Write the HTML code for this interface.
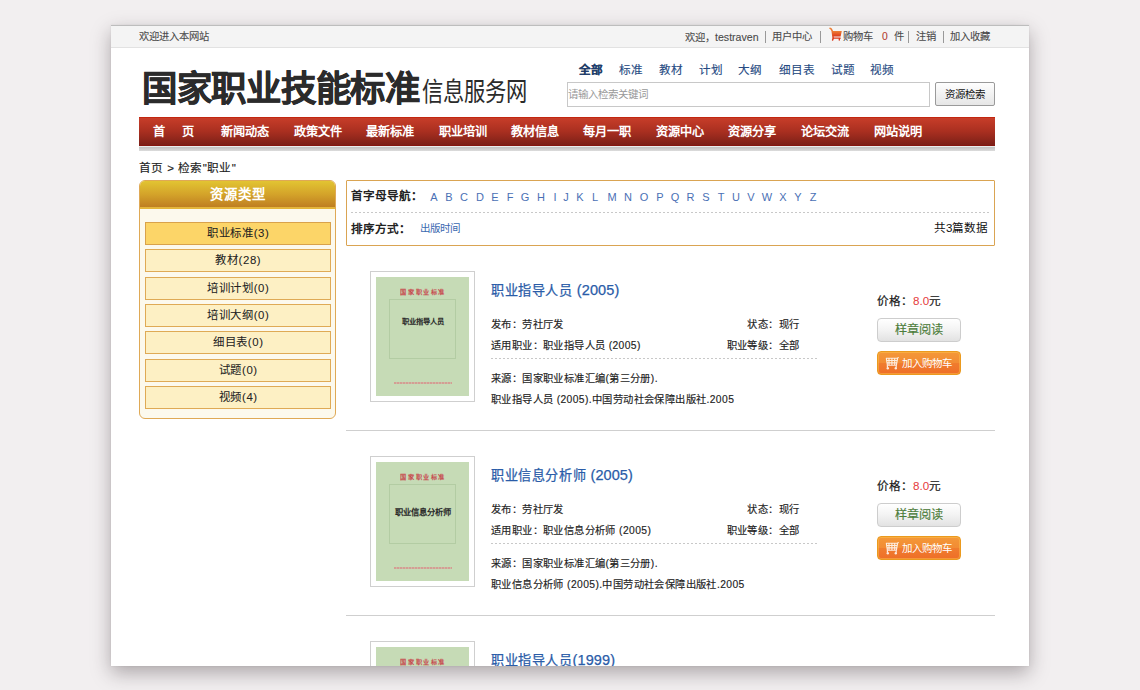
<!DOCTYPE html>
<html lang="zh-CN"><head><meta charset="utf-8">
<style>
*{margin:0;padding:0;box-sizing:border-box}
html,body{width:1140px;height:690px;overflow:hidden;background:#f2eff0;font-family:"Liberation Sans",sans-serif;color:#333}
#win{position:absolute;left:111px;top:25px;width:918px;height:641px;background:#fff;overflow:hidden;box-shadow:0 7px 18px rgba(50,40,45,.36),0 0 2px rgba(0,0,0,.08)}
#pg{position:absolute;left:-111px;top:-25px;width:1140px;height:690px}
.a{position:absolute;white-space:nowrap;line-height:1}
#topbar{position:absolute;left:111px;top:25px;width:918px;height:23px;background:#f4f4f4;border-top:1px solid #bdbdbd;border-bottom:1px solid #e2e2e2}
.tb{font-size:10.3px;color:#4a4a4a;top:32px;-webkit-text-stroke:0.1px #4a4a4a}
.sep{position:absolute;top:31px;width:1px;height:12px;background:#999}
.logo{left:142px;top:72px;font-size:35.4px;font-weight:bold;color:#2b2b2b;letter-spacing:-0.3px;-webkit-text-stroke:0.6px #2b2b2b}
.logo2{left:422px;top:80px;font-size:21.3px;color:#2b2b2b;transform:scaleY(1.25);transform-origin:0 0}
.tab{top:64px;font-size:11.6px;color:#264a82;-webkit-text-stroke:0.12px #264a82}
#search{position:absolute;left:567px;top:82px;width:363px;height:25px;border:1px solid #c8c8c8;background:#fff}
#search span{position:absolute;left:0px;top:6px;font-size:10.5px;color:#999;line-height:1;white-space:nowrap}
#sbtn{position:absolute;left:935px;top:82px;width:60px;height:24px;border:1px solid #9a9a9a;border-radius:2px;background:linear-gradient(#fefefe,#e6e6e6);font-size:10.5px;color:#111;line-height:22px;text-align:center}
#nav{position:absolute;left:139px;top:117px;width:856px;height:29px;border-top:1px solid #c3260f;border-bottom:1px solid #861710;background:linear-gradient(#c73d29,#a92f20 50%,#7c2018)}
#navsh{position:absolute;left:139px;top:146px;width:856px;height:5px;border-top:1px solid #e9eeee;background:linear-gradient(#c2c2c2,#dcdcdc)}
.nv{top:125.8px;font-size:12.2px;font-weight:bold;color:#fff}
.crumb{left:139px;top:162px;font-size:11.6px;color:#222;letter-spacing:0.35px;-webkit-text-stroke:0.15px #222}
#side{position:absolute;left:139px;top:180px;width:197px;height:239px;border:1px solid #dfa956;border-radius:6px;background:#fcf9ed;overflow:hidden}
#sidehd{position:absolute;left:0;top:0;width:195px;height:28px;background:linear-gradient(#e2c432,#d4a42a 50%,#bf7e21);border-bottom:2px solid #e4b53a}
#sidehd span{position:absolute;left:0;width:195px;padding-left:1px;text-align:center;top:7px;font-size:13.4px;font-weight:bold;color:#fff;line-height:1;letter-spacing:1px}
.si{position:absolute;left:145px;width:186px;height:23px;border:1px solid #dfaa55;background:#fdf0c4;font-size:11.4px;color:#222;text-align:center;line-height:21px;letter-spacing:0.6px;padding-left:0.6px;-webkit-text-stroke:0.05px #222}
.si.on{background:#fcd568;border-color:#d9a24b}
#filt{position:absolute;left:346px;top:180px;width:649px;height:66px;border:1.5px solid #daa452;border-radius:1px}
.dash{position:absolute;height:1px;background:repeating-linear-gradient(90deg,#c8c8c8 0 2px,transparent 2px 4px)}
.fl{font-size:11.6px;font-weight:bold;color:#222}
.lt{position:absolute;top:191.5px;font-size:11px;color:#4a70b5;line-height:1}
.item{position:absolute;left:0;width:1140px;height:185px}
.cov{position:absolute;left:370px;top:271px;width:105px;height:131px;border:1px solid #cfcfcf;background:#fff}
.cov .g{position:absolute;left:5px;top:5px;width:93px;height:119px;background:#c6dbb6}
.cov .fr{position:absolute;left:13px;top:22px;width:67px;height:60px;border:1px solid #b3cca3}
.cov .r1{position:absolute;left:0;width:93px;padding-left:1.6px;top:12px;text-align:center;font-family:"Liberation Serif",serif;font-size:6.2px;font-weight:bold;color:#c8303c;letter-spacing:1.6px;opacity:.85;line-height:1}
.cov .b1{position:absolute;left:0;width:93px;top:41px;text-align:center;font-family:"Liberation Serif",serif;font-size:7.3px;font-weight:bold;color:#2a2a2a;line-height:1}
.cov .r2{position:absolute;left:18px;width:58px;top:105px;height:2px;opacity:.75;background:repeating-linear-gradient(90deg,#d98a88 0 2px,#cfb0a0 2px 3px)}
.ttl{font-size:13.1px;color:#2a5ca8;left:491px;letter-spacing:0.6px;-webkit-text-stroke:0.25px #2a5ca8}
.ttl .ln{font-size:14.5px;letter-spacing:0.1px}
.tx{font-size:10.3px;color:#222;letter-spacing:0.4px;-webkit-text-stroke:0.15px #222}
.price{left:877px;font-size:11.6px;color:#1a1a1a;-webkit-text-stroke:0.2px #1a1a1a}
.price b{-webkit-text-stroke:0}
.price b{font-weight:normal;color:#e53a3c}
.btn1{position:absolute;left:877px;width:84px;height:24px;border:1px solid #cdcdcd;border-radius:4px;background:linear-gradient(#ffffff,#f3f3f3 50%,#e2e2e2);font-size:12.2px;color:#4d7d3b;text-align:center;line-height:22px;-webkit-text-stroke:0.15px #4d7d3b}
.btn2{position:absolute;left:877px;width:84px;height:24px;border:1px solid #eb9a1e;border-radius:4px;box-shadow:inset 0 0 0 1px rgba(255,200,80,.45);background:linear-gradient(#f49838,#f28c34 48%,#f07c2e 52%,#ee6e28);font-size:10.5px;color:#fff;line-height:22px;letter-spacing:0}
.btn2 svg{position:absolute;left:7px;top:5px;opacity:.85}
.btn2 span{position:absolute;left:24px;top:0}
.hr{position:absolute;left:346px;width:649px;height:1px;background:#cfcfcf}
</style></head><body>
<div id="win"><div id="pg">
<div id="topbar"></div>
<div class="a tb" style="left:139px">欢迎进入本网站</div>
<div class="a tb" style="left:685px">欢迎，<span style="font-size:10.6px">testraven</span></div>
<div class="sep" style="left:765px"></div>
<div class="a tb" style="left:772px">用户中心</div>
<div class="sep" style="left:820px"></div>
<svg class="a" style="left:829px;top:27px" width="14" height="14" viewBox="0 0 14 14"><defs><linearGradient id="cg" x1="0" y1="0" x2="0" y2="1"><stop offset="0" stop-color="#ee8035"/><stop offset="1" stop-color="#dc3a1c"/></linearGradient></defs><path d="M1 1.3Q2.6 1.6 3.2 4L4.2 11.4 3.6 13" fill="none" stroke="url(#cg)" stroke-width="1.5" stroke-linecap="round"/><path d="M3.2 4H12.8L11.6 9.4H4z" fill="url(#cg)"/><path d="M4.2 11.2H11.2M10.6 11.2L10.2 13" stroke="#dc3a1c" stroke-width="1.3" fill="none" stroke-linecap="round"/></svg>
<div class="a tb" style="left:843px">购物车</div>
<div class="a tb" style="left:882px;color:#c0392b">0</div>
<div class="a tb" style="left:894px">件</div>
<div class="sep" style="left:908px"></div>
<div class="a tb" style="left:916px">注销</div>
<div class="sep" style="left:943px"></div>
<div class="a tb" style="left:950px">加入收藏</div>

<div class="a logo">国家职业技能标准</div>
<div class="a logo2">信息服务网</div>

<div class="a tab" style="left:579px;color:#111;font-weight:bold">全部</div>
<div class="a tab" style="left:619px">标准</div>
<div class="a tab" style="left:659px">教材</div>
<div class="a tab" style="left:699px">计划</div>
<div class="a tab" style="left:738px">大纲</div>
<div class="a tab" style="left:779px">细目表</div>
<div class="a tab" style="left:831px">试题</div>
<div class="a tab" style="left:870px">视频</div>
<div id="search"><span>请输入检索关键词</span></div>
<div id="sbtn">资源检索</div>

<div id="nav"></div><div id="navsh"></div>
<div class="a nv" style="left:153px">首&nbsp;&nbsp;&nbsp;&nbsp;&nbsp;页</div>
<div class="a nv" style="left:221px">新闻动态</div>
<div class="a nv" style="left:294px">政策文件</div>
<div class="a nv" style="left:366px">最新标准</div>
<div class="a nv" style="left:439px">职业培训</div>
<div class="a nv" style="left:511px">教材信息</div>
<div class="a nv" style="left:583px">每月一职</div>
<div class="a nv" style="left:656px">资源中心</div>
<div class="a nv" style="left:728px">资源分享</div>
<div class="a nv" style="left:801px">论坛交流</div>
<div class="a nv" style="left:874px">网站说明</div>

<div class="a crumb">首页 &gt; 检索"职业"</div>

<div id="side"><div id="sidehd"><span>资源类型</span></div></div>
<div class="si on" style="top:222px">职业标准(3)</div>
<div class="si" style="top:249px">教材(28)</div>
<div class="si" style="top:277px">培训计划(0)</div>
<div class="si" style="top:304px">培训大纲(0)</div>
<div class="si" style="top:331px">细目表(0)</div>
<div class="si" style="top:359px">试题(0)</div>
<div class="si" style="top:386px">视频(4)</div>

<div id="filt"></div>
<div class="a fl" style="left:351px;top:190px">首字母导航：</div>
<div class="lt" style="left:424px;width:20px;text-align:center">A</div><div class="lt" style="left:439px;width:20px;text-align:center">B</div><div class="lt" style="left:454px;width:20px;text-align:center">C</div><div class="lt" style="left:470px;width:20px;text-align:center">D</div><div class="lt" style="left:485px;width:20px;text-align:center">E</div><div class="lt" style="left:500px;width:20px;text-align:center">F</div><div class="lt" style="left:515px;width:20px;text-align:center">G</div><div class="lt" style="left:531px;width:20px;text-align:center">H</div><div class="lt" style="left:545px;width:20px;text-align:center">I</div><div class="lt" style="left:556px;width:20px;text-align:center">J</div><div class="lt" style="left:570px;width:20px;text-align:center">K</div><div class="lt" style="left:585px;width:20px;text-align:center">L</div><div class="lt" style="left:602px;width:20px;text-align:center">M</div><div class="lt" style="left:618px;width:20px;text-align:center">N</div><div class="lt" style="left:634px;width:20px;text-align:center">O</div><div class="lt" style="left:650px;width:20px;text-align:center">P</div><div class="lt" style="left:665px;width:20px;text-align:center">Q</div><div class="lt" style="left:680.5px;width:20px;text-align:center">R</div><div class="lt" style="left:696px;width:20px;text-align:center">S</div><div class="lt" style="left:711px;width:20px;text-align:center">T</div><div class="lt" style="left:726px;width:20px;text-align:center">U</div><div class="lt" style="left:741px;width:20px;text-align:center">V</div><div class="lt" style="left:757px;width:20px;text-align:center">W</div><div class="lt" style="left:773px;width:20px;text-align:center">X</div><div class="lt" style="left:788px;width:20px;text-align:center">Y</div><div class="lt" style="left:803px;width:20px;text-align:center">Z</div>
<div class="dash" style="left:351px;top:212px;width:639px"></div>
<div class="a fl" style="left:351px;top:223px">排序方式：</div>
<div class="a" style="left:420px;top:223px;font-size:10.5px;color:#3b69b0">出版时间</div>
<div class="a fl" style="left:934px;top:222px;font-weight:normal;color:#111">共3篇数据</div>

<div class="item" style="top:0px">
<div class="cov"><div class="g"><div class="r1">国家职业标准</div><div class="fr"></div><div class="b1" style="">职业指导人员</div><div class="r2"></div></div></div>
<div class="a ttl" style="top:283px">职业指导人员 <span class='ln'>(2005)</span></div>
<div class="a tx" style="left:491px;top:320px">发布：劳社厅发</div>
<div class="a tx" style="right:341px;top:320px;letter-spacing:0.42px">状态：现<span style="letter-spacing:0">行</span></div>
<div class="a tx" style="left:491px;top:341px">适用职业：职业指导人员 (2005)</div>
<div class="a tx" style="right:341px;top:341px">职业等级：全<span style="letter-spacing:0">部</span></div>
<div class="dash" style="left:491px;top:358px;width:326px"></div>
<div class="a tx" style="left:491px;top:374px">来源：国家职业标准汇编(第三分册).</div>
<div class="a tx" style="left:491px;top:395px">职业指导人员 (2005).中国劳动社会保障出版社.2005</div>
<div class="a price" style="top:295px">价格：<b>8.0</b>元</div>
<div class="btn1" style="top:318px">样章阅读</div>
<div class="btn2" style="top:351px"><svg width="14" height="13" viewBox="0 0 14 13"><path d="M1 1.2H12.6M1.3 1.2L2.4 8.2H11.4L12.6 1.2M13.6 0.2L12.6 1.2M1.6 3.5H12.2M1.9 5.8H11.8M4 1.2V8.2M6.9 1.2V8.2M9.7 1.2V8.2" fill="none" stroke="#fff" stroke-width="1.15"/><path d="M2.4 8.2V10.5M11.2 8.2V10.5" stroke="#fff" stroke-width="1.2"/><circle cx="2.8" cy="11.3" r="1.2" fill="#fff"/><circle cx="10.8" cy="11.3" r="1.2" fill="#fff"/></svg><span>加入购物车</span></div>
<div class="hr" style="top:430px"></div>
</div>
<div class="item" style="top:185px">
<div class="cov"><div class="g"><div class="r1">国家职业标准</div><div class="fr"></div><div class="b1" style="font-size:8.3px;top:47px">职业信息分析师</div><div class="r2"></div></div></div>
<div class="a ttl" style="top:283px">职业信息分析师 <span class='ln'>(2005)</span></div>
<div class="a tx" style="left:491px;top:320px">发布：劳社厅发</div>
<div class="a tx" style="right:341px;top:320px;letter-spacing:0.42px">状态：现<span style="letter-spacing:0">行</span></div>
<div class="a tx" style="left:491px;top:341px">适用职业：职业信息分析师 (2005)</div>
<div class="a tx" style="right:341px;top:341px">职业等级：全<span style="letter-spacing:0">部</span></div>
<div class="dash" style="left:491px;top:358px;width:326px"></div>
<div class="a tx" style="left:491px;top:374px">来源：国家职业标准汇编(第三分册).</div>
<div class="a tx" style="left:491px;top:395px">职业信息分析师 (2005).中国劳动社会保障出版社.2005</div>
<div class="a price" style="top:295px">价格：<b>8.0</b>元</div>
<div class="btn1" style="top:318px">样章阅读</div>
<div class="btn2" style="top:351px"><svg width="14" height="13" viewBox="0 0 14 13"><path d="M1 1.2H12.6M1.3 1.2L2.4 8.2H11.4L12.6 1.2M13.6 0.2L12.6 1.2M1.6 3.5H12.2M1.9 5.8H11.8M4 1.2V8.2M6.9 1.2V8.2M9.7 1.2V8.2" fill="none" stroke="#fff" stroke-width="1.15"/><path d="M2.4 8.2V10.5M11.2 8.2V10.5" stroke="#fff" stroke-width="1.2"/><circle cx="2.8" cy="11.3" r="1.2" fill="#fff"/><circle cx="10.8" cy="11.3" r="1.2" fill="#fff"/></svg><span>加入购物车</span></div>
<div class="hr" style="top:430px"></div>
</div>
<div class="item" style="top:370px">
<div class="cov"><div class="g"><div class="r1">国家职业标准</div><div class="fr"></div><div class="b1" style="">职业指导人员</div><div class="r2"></div></div></div>
<div class="a ttl" style="top:283px">职业指导人员<span class='ln'>(1999)</span></div>
<div class="a tx" style="left:491px;top:320px">发布：劳社厅发</div>
<div class="a tx" style="right:341px;top:320px;letter-spacing:0.42px">状态：现<span style="letter-spacing:0">行</span></div>
<div class="a tx" style="left:491px;top:341px">适用职业：职业指导人员(1999)</div>
<div class="a tx" style="right:341px;top:341px">职业等级：全<span style="letter-spacing:0">部</span></div>
<div class="dash" style="left:491px;top:358px;width:326px"></div>
<div class="a tx" style="left:491px;top:374px">来源：国家职业标准汇编(第三分册).</div>
<div class="a tx" style="left:491px;top:395px">职业指导人员(1999).中国劳动社会保障出版社.1999</div>

<div class="btn1" style="top:318px">样章阅读</div>
<div class="btn2" style="top:351px"><svg width="14" height="13" viewBox="0 0 14 13"><path d="M1 1.2H12.6M1.3 1.2L2.4 8.2H11.4L12.6 1.2M13.6 0.2L12.6 1.2M1.6 3.5H12.2M1.9 5.8H11.8M4 1.2V8.2M6.9 1.2V8.2M9.7 1.2V8.2" fill="none" stroke="#fff" stroke-width="1.15"/><path d="M2.4 8.2V10.5M11.2 8.2V10.5" stroke="#fff" stroke-width="1.2"/><circle cx="2.8" cy="11.3" r="1.2" fill="#fff"/><circle cx="10.8" cy="11.3" r="1.2" fill="#fff"/></svg><span>加入购物车</span></div>
<div class="hr" style="top:430px"></div>
</div>
</div></div>
</body></html>
